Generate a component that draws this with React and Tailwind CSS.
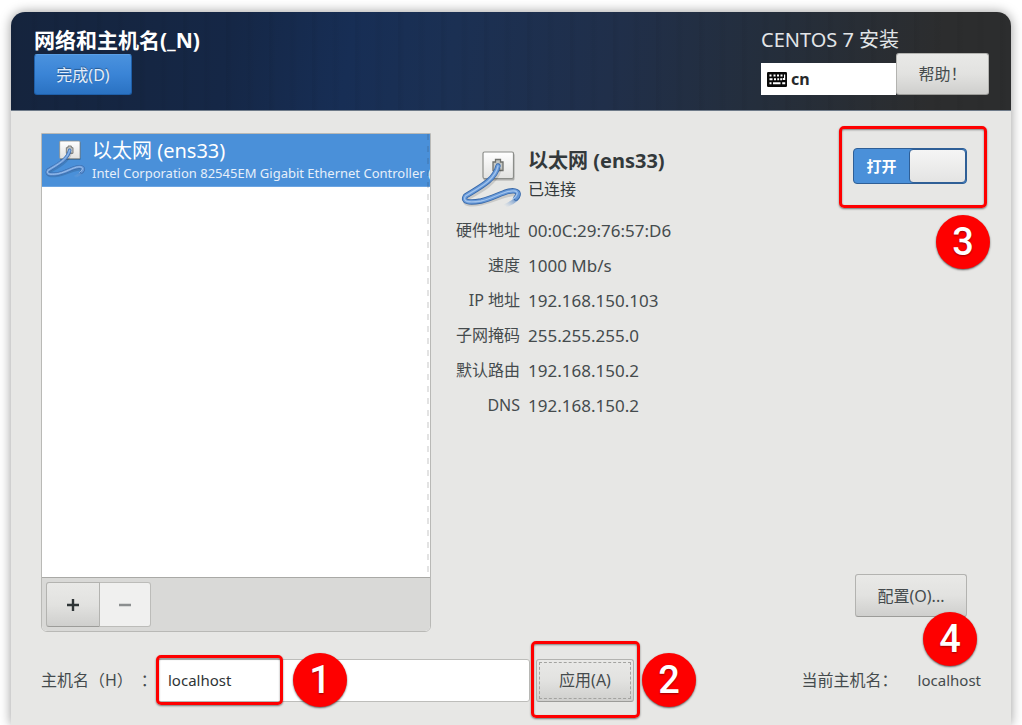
import React from "react";

const details = [
  ["硬件地址", "00:0C:29:76:57:D6"],
  ["速度", "1000 Mb/s"],
  ["IP 地址", "192.168.150.103"],
  ["子网掩码", "255.255.255.0"],
  ["默认路由", "192.168.150.2"],
  ["DNS", "192.168.150.2"],
];

const grayButton =
  "rounded-[3px] border border-[#b3b3b0] border-b-[#9c9c99] bg-linear-to-b from-[#e9e9e7] via-[#e2e2e0] to-[#cfcfcd] text-[#454b4d] text-base";

function Marker({ n, className }) {
  return (
    <span
      className={`absolute z-10 flex size-[54px] items-center justify-center rounded-full bg-[#fe0000] font-[Roboto,sans-serif] text-[38px] leading-none font-medium text-white shadow-[0_1px_2px_rgba(0,0,0,0.6)] text-shadow-[0_1px_2px_rgba(0,0,0,0.4)] ${className}`}
    >
      {n}
    </span>
  );
}

function Frame({ className }) {
  return (
    <span
      className={`pointer-events-none absolute z-10 rounded-[5px] border-[3px] border-[#fe0000] shadow-[0_1px_2px_rgba(0,0,0,0.5),inset_0_1px_2px_rgba(0,0,0,0.45)] ${className}`}
    />
  );
}

function WiredIcon({ className }) {
  return (
    <svg viewBox="0 0 60 60" className={className} aria-hidden="true">
      <defs>
        <linearGradient id="plate" x1="0" y1="0" x2="0" y2="1">
          <stop offset="0" stopColor="#ffffff" />
          <stop offset="1" stopColor="#e2e2e0" />
        </linearGradient>
        <linearGradient id="tail" gradientUnits="userSpaceOnUse" x1="54" y1="46" x2="45" y2="58">
          <stop offset="0" stopColor="#3f74b8" />
          <stop offset="1" stopColor="#8fb3e0" stopOpacity="0" />
        </linearGradient>
      </defs>
      <rect x="22.500" y="4.500" width="31" height="27" rx="1.500" fill="#000" fillOpacity="0.25" />
      <rect x="22" y="3" width="30.500" height="26.500" rx="1.500" fill="url(#plate)" stroke="#8c8e8a" strokeWidth="1.200" />
      <path d="M32 21.500v-8.500h2.500v-2.500h5v2.500h2.500v8.500z" fill="#c4c6c2" stroke="#6f716d" strokeWidth="1.300" />
      <path d="M34.500 19v-4h5v4z" fill="#eeeeec" />
      <g fill="none" strokeLinecap="round" strokeLinejoin="round">
        <path d="M38 21C35 33 21 41 6 49C1 55 9 56 20 54C34 51 48 43 55 45" stroke="#000" strokeOpacity="0.13" strokeWidth="5" />
        <path d="M55 43C62 47 53 53 44 57" stroke="url(#tail)" strokeWidth="4" />
        <path d="M37 17C34 31 19 38 4.500 47C1 53 8 54 20 52C34 49 46 40 54 42C58 43 58 46 55 49" stroke="#3969a9" strokeWidth="5.400" />
        <path d="M37 17C34 31 19 38 4.500 47C1 53 8 54 20 52C34 49 46 40 54 42C58 43 58 46 55 49" stroke="#6698d8" strokeWidth="3.800" />
        <path d="M37 17C34 31 19 38 4.500 47C1 53 8 54 20 52C34 49 46 40 54 42C58 43 56 47 52 50" stroke="#a3c4ec" strokeWidth="1.300" />
      </g>
    </svg>
  );
}

function KeyboardIcon() {
  return (
    <svg viewBox="0 0 20 15" className="h-[15px] w-5 shrink-0" aria-hidden="true">
      <rect width="20" height="15" rx="1.2" fill="#080808" />
      <g fill="#fff">
        <path d="M2.500 2.500h2v2h-2zM6.500 2.500h2v2h-2zM10 2.500h2v2h-2zM13.500 2.500h2v2h-2z" />
        <path d="M17 2.500h1.200v5.500h-2.500v-2H17z" />
        <path d="M2.500 6.300h3v2h-3zM7 6.300h2v2H7zM10.300 6.300h1.800v2h-1.800zM13.200 6.300h1.800v2h-1.800z" />
        <path d="M2.500 10.300h2v2h-2zM6 10.300h7.500v2H6zM15.200 10.300h3v2h-3z" />
      </g>
    </svg>
  );
}

function Header() {
  return (
    <header className="flex h-[99px] justify-between rounded-t-[14px] border-b border-[#6f7b89] bg-[repeating-linear-gradient(90deg,rgba(0,0,0,0.04)_0_2px,transparent_7px_19px,rgba(0,0,0,0.03)_23px,transparent_29px_43px),linear-gradient(100deg,#15243d_0%,#152746_22%,#172e55_34%,#1b3053_44%,#202f4a_60%,#242e3c_75%,#2c2d2e_92%)] pl-[23px] pr-[22px]">
      <div className="flex flex-col items-start pt-[14px]">
        <h1 className="text-[21px] leading-7 font-bold text-white">网络和主机名(_N)</h1>
        <button className="h-[41px] w-[98px] rounded-[3px] border border-[#1f5fa8] border-t-[#5a9fe6] bg-linear-to-b from-[#4a92de] via-[#3a84d6] to-[#2a72c2] text-base text-[#e4eefa] text-shadow-[0_-1px_1px_rgba(0,0,0,0.35)]">
          完成(D)
        </button>
      </div>
      <div className="pt-[14px]">
        <p className="text-xl leading-7 text-[#e2e5e8]">CENTOS 7 安装</p>
        <div className="flex items-end">
          <div className="flex h-8 w-[135px] items-center gap-1 bg-white pl-[6px] text-base font-bold text-[#26292b]">
            <KeyboardIcon />
            cn
          </div>
          <button className={`-mt-px h-[42px] w-[93px] ${grayButton}`}>帮助！</button>
        </div>
      </div>
    </header>
  );
}

function DeviceList() {
  return (
    <section className="flex w-[390px] shrink-0 flex-col overflow-hidden rounded-b-md border border-[#b9b9b6] bg-white">
      <ul className="relative flex-1">
        <li className="flex h-[53px] items-start border-b border-[#6ba4e2] bg-[#4a90d9] text-white">
          <WiredIcon className="mt-[5px] ml-[3px] size-10 shrink-0" />
          <div className="ml-[7px] pt-[5px] whitespace-nowrap">
            <p className="text-xl leading-6">以太网 (ens33)</p>
            <p className="text-[13px] leading-5 text-[#e6effa]">Intel Corporation 82545EM Gigabit Ethernet Controller (</p>
          </div>
        </li>
        <li
          aria-hidden="true"
          className="absolute inset-y-0 right-px w-[2px] bg-[repeating-linear-gradient(180deg,rgba(40,40,40,0.13)_0_6px,transparent_6px_12px)]"
        />
      </ul>
      <div className="flex h-[54px] border-t border-[#a9a9a6] bg-[#d9d9d7] px-1 pt-1">
        <button aria-label="添加" className={`flex h-[45px] w-[54px] items-center justify-center rounded-r-none ${grayButton}`}>
          <svg viewBox="0 0 14 14" className="size-[14px]" aria-hidden="true">
            <path d="M7 1v12M1 7h12" stroke="#2e3436" strokeWidth="2.400" />
          </svg>
        </button>
        <button
          aria-label="移除"
          disabled
          className="flex h-[45px] w-[51px] items-center justify-center rounded-r-[3px] border border-l-0 border-[#bcbcb9] bg-[#f0f0ef]"
        >
          <svg viewBox="0 0 14 14" className="size-[14px]" aria-hidden="true">
            <path d="M1 7h12" stroke="#8b8e8f" strokeWidth="2.400" />
          </svg>
        </button>
      </div>
    </section>
  );
}

function DeviceDetails() {
  return (
    <section className="flex flex-1 flex-col justify-between">
      <div className="flex justify-between">
        <div className="pt-4">
          <div className="flex h-16 items-start">
            <WiredIcon className="ml-[30px] size-[60px] shrink-0" />
            <div className="ml-[7px] text-[#33393b]">
              <h2 className="text-xl leading-6 font-bold">以太网 (ens33)</h2>
              <p className="mt-1 text-base leading-6">已连接</p>
            </div>
          </div>
          <dl className="grid grid-cols-[89px_auto] gap-x-2 text-base text-[#454b4d]">
            {details.map(([name, value]) => (
              <React.Fragment key={name}>
                <dt className="text-right leading-[35px]">{name}</dt>
                <dd className="text-[17px] leading-[35px]">{value}</dd>
              </React.Fragment>
            ))}
          </dl>
        </div>
        <div className="relative mt-[15px] mr-[14px] self-start">
          <label className="flex h-9 w-[114px] overflow-hidden rounded-[4px] border border-[#2f5f96] bg-[#4a90d9]">
            <input type="checkbox" role="switch" defaultChecked aria-label="以太网 (ens33)" className="sr-only" />
            <span className="flex flex-1 items-center justify-center text-[15px] font-bold text-white">打开</span>
            <span className="w-[57px] rounded-[4px] border border-[#2f5f96] bg-linear-to-b from-[#f5f5f5] to-[#e4e4e3]" />
          </label>
          <Frame className="-top-[22px] -right-5 h-[82px] w-[148px]" />
          <Marker n="3" className="top-[67px] -right-[23px]" />
        </div>
      </div>
      <div className="relative mr-[14px] mb-[15px] self-end">
        <button className={`h-[43px] w-[112px] ${grayButton}`}>配置(O)...</button>
        <Marker n="4" className="top-[38px] -right-[10px]" />
      </div>
    </section>
  );
}

function HostnameBar() {
  return (
    <form className="mt-[26px] flex h-11 items-center text-base text-[#454b4d]" onSubmit={(e) => e.preventDefault()}>
      <label htmlFor="hostname" className="flex w-[115px] shrink-0 gap-2 whitespace-nowrap">
        <span>主机名（H）</span>
        <span>：</span>
      </label>
      <div className="relative w-[374px]">
        <input
          id="hostname"
          defaultValue="localhost"
          className="h-[43px] w-full rounded-[3px] border border-[#bdbdba] bg-white pl-[11px] text-[15px] text-[#2e3436] outline-none"
        />
        <Frame className="-top-1 left-0 h-[50px] w-[127px]" />
        <Marker n="1" className="-top-[6px] left-[137px]" />
      </div>
      <div className="relative ml-[6px]">
        <button type="submit" className={`h-[43px] w-[98px] p-[2px] ${grayButton}`}>
          <span className="flex h-full items-center justify-center border border-dashed border-[#a3a3a0]">应用(A)</span>
        </button>
        <Frame className="-top-[18px] -left-[5px] h-[77px] w-[109px]" />
        <Marker n="2" className="-top-[6px] left-[106px]" />
      </div>
      <p className="ml-auto flex items-baseline gap-5 whitespace-nowrap">
        <span>当前主机名：</span>
        <span className="text-[15px]">localhost</span>
      </p>
    </form>
  );
}

export default function App() {
  return (
    <div className="flex min-h-screen flex-col overflow-hidden bg-white px-[11px] pt-3 font-['Noto_Sans','Noto_Sans_CJK_SC',sans-serif]">
      <main className="flex flex-1 flex-col rounded-t-[14px] bg-[#e7e7e5] shadow-[0_0_12px_rgba(0,0,0,0.4)]">
        <Header />
        <div className="flex flex-1 flex-col pt-[22px] pr-[30px] pb-[23px] pl-[30px]">
          <div className="flex flex-1">
            <DeviceList />
            <DeviceDetails />
          </div>
          <HostnameBar />
        </div>
      </main>
    </div>
  );
}
